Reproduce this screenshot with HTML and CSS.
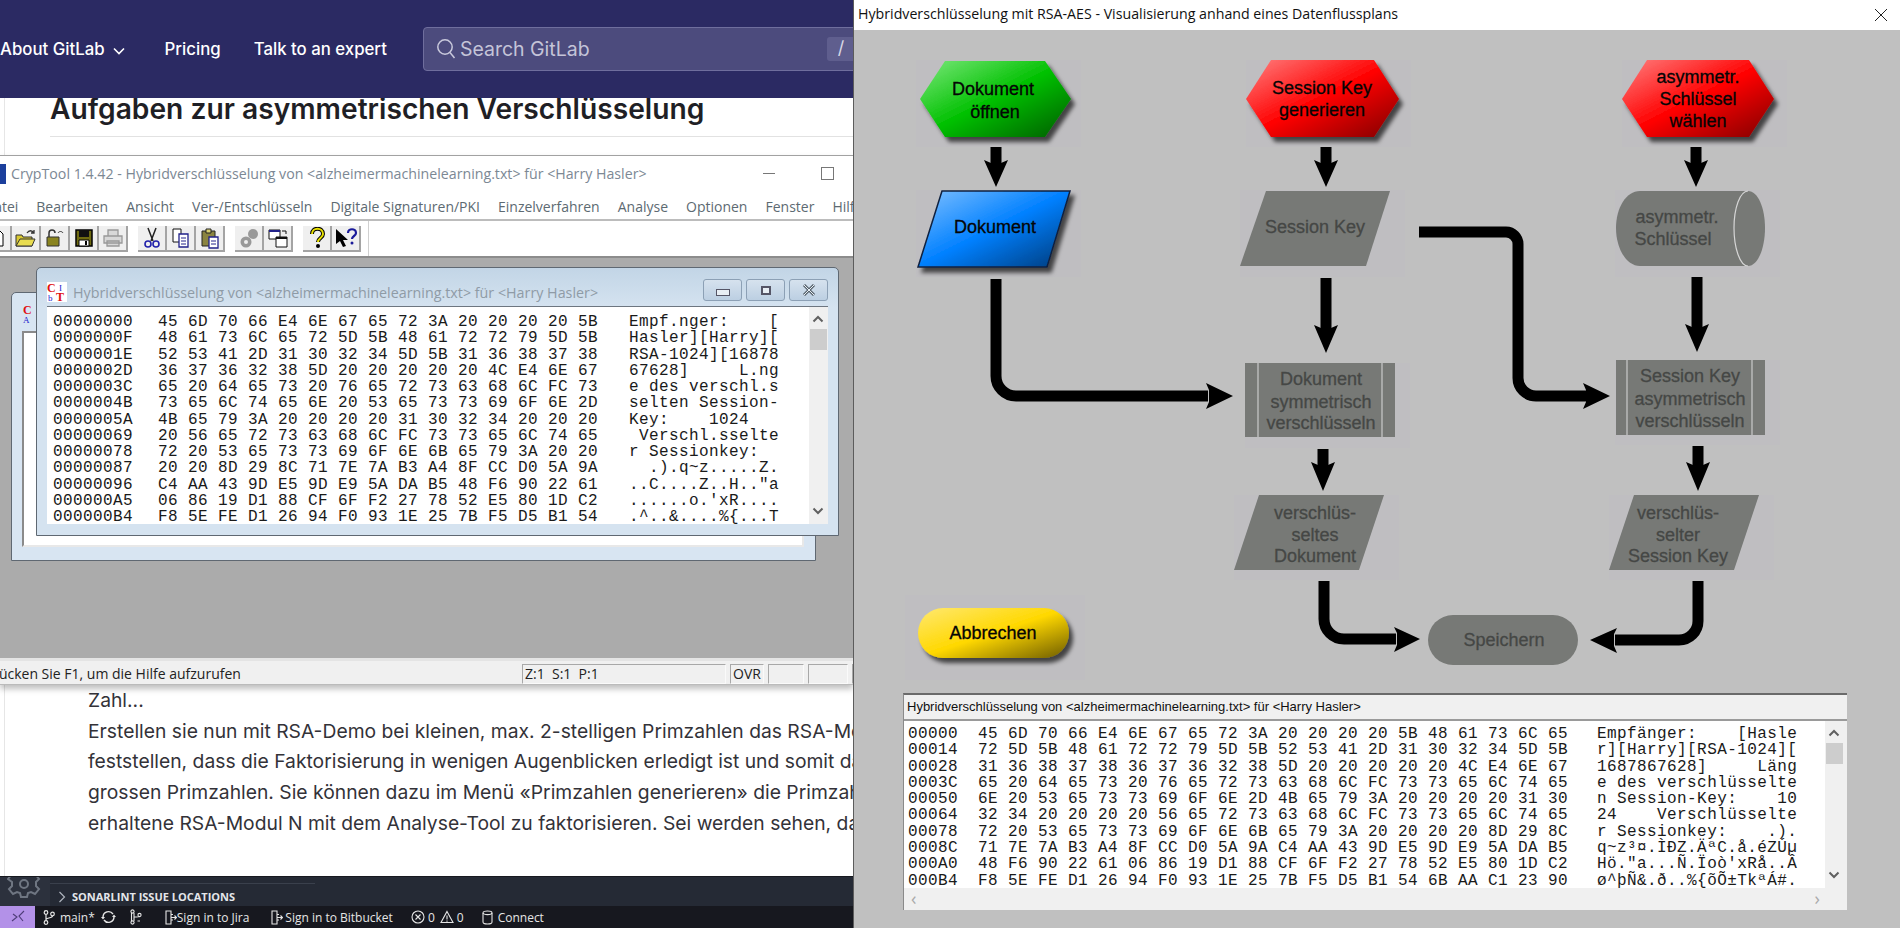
FILE: index.html
```html
<!DOCTYPE html>
<html lang="de">
<head>
    <meta charset="UTF-8">
    <title>Hybridverschlüsselung mit RSA-AES</title>
    <link rel="stylesheet" href="styles.css">
</head>
<body>
    <div class="left">
        <header class="nav">
            <a class="nav-item first">About GitLab</a>
            <svg class="chev" width="12" height="8" viewBox="0 0 12 8"><path d="M1 1.5l5 5 5-5" fill="none" stroke="#fff" stroke-width="1.6"/></svg>
            <a class="nav-item pricing">Pricing</a>
            <a class="nav-item talk">Talk to an expert</a>
            <div class="search">
                <svg width="20" height="22" viewBox="0 0 20 22"><circle cx="9" cy="9" r="7.2" fill="none" stroke="#c9c9dc" stroke-width="1.5"/><path d="M14 14.5l4.5 5.5" stroke="#c9c9dc" stroke-width="1.5"/></svg>
                <span>Search GitLab</span>
                <kbd>/</kbd>
            </div>
        </header>

        <main class="page">
            <h1>Aufgaben zur asymmetrischen Verschlüsselung</h1>
            <div class="rule"></div>
            <div class="article">
                <p>Zahl...</p>
                <p>Erstellen sie nun mit RSA-Demo bei kleinen, max. 2-stelligen Primzahlen das RSA-Modul</p>
                <p>feststellen, dass die Faktorisierung in wenigen Augenblicken erledigt ist und somit das</p>
                <p>grossen Primzahlen. Sie können dazu im Menü «Primzahlen generieren» die Primzahlen</p>
                <p>erhaltene RSA-Modul N mit dem Analyse-Tool zu faktorisieren. Sei werden sehen, dass</p>
            </div>
        </main>

        <div class="panel">
            <div class="activity">
                <svg width="34" height="30" viewBox="0 0 34 30"><path d="M14 1h6l1 4 3 1 4-2 4 5-3 3v4l3 3-4 5-4-2-3 1-1 4h-6l-1-4-3-1-4 2-4-5 3-3v-4L1 9l4-5 4 2 3-1z" fill="none" stroke="#6f7682" stroke-width="2"/><circle cx="17" cy="14" r="4" fill="none" stroke="#6f7682" stroke-width="2"/></svg>
            </div>
            <div class="panel-main">
                <div class="panel-line"></div>
                <div class="panel-title">
                    <svg width="8" height="12" viewBox="0 0 8 12"><path d="M1.5 1l5 5-5 5" fill="none" stroke="#aeb4bd" stroke-width="1.2"/></svg>
                    SONARLINT ISSUE LOCATIONS
                </div>
            </div>
        </div>
        <footer class="status">
            <div class="remote"><svg width="14" height="14" viewBox="0 0 14 14"><path d="M1 11l5-4-4-3M13 1L8 6l4 5" fill="none" stroke="#4e3d78" stroke-width="1.1"/></svg></div>
            <svg class="s-branch" width="12" height="15" viewBox="0 0 12 15"><g fill="none" stroke="#e6e6e6" stroke-width="1.2"><circle cx="3" cy="2.5" r="1.8"/><circle cx="3" cy="12.5" r="1.8"/><circle cx="9.5" cy="4" r="1.8"/><path d="M3 4.5v6M3 9.5c0-2 6.5-1 6.5-3.7"/></g></svg>
            <span class="s-main">main*</span>
            <svg class="s-sync" width="15" height="14" viewBox="0 0 15 14"><g fill="none" stroke="#e6e6e6" stroke-width="1.4"><path d="M2 7a5.5 5.5 0 0 1 10-3"/><path d="M13 7a5.5 5.5 0 0 1-10 3"/></g><path d="M0 7h4L2 9.5zM15 7h-4l2-2.500z" fill="#e6e6e6"/></svg>
            <svg class="s-graph" width="14" height="16" viewBox="0 0 14 16"><g fill="none" stroke="#e6e6e6" stroke-width="1.1"><circle cx="3.500" cy="2.500" r="1.600"/><circle cx="3.500" cy="13.500" r="1.600"/><circle cx="10.500" cy="6" r="1.600"/><path d="M2.500 4v8M5 4v8M5 8c3 0 5.500 0 5.500-.5M8.500 12h2.500"/></g></svg>
            <svg class="s-door" width="12" height="15" viewBox="0 0 12 15"><g fill="none" stroke="#e6e6e6" stroke-width="1.1"><path d="M1 1h5v13H1zM6 4.500h2M6 10h2M6 7.500h5.500M9.500 5.500l2 2-2 2"/></g></svg>
            <span class="s-jira">Sign in to Jira</span>
            <svg class="s-door2" width="12" height="15" viewBox="0 0 12 15"><g fill="none" stroke="#e6e6e6" stroke-width="1.1"><path d="M1 1h5v13H1zM6 4.500h2M6 10h2M6 7.500h5.500M9.500 5.500l2 2-2 2"/></g></svg>
            <span class="s-bit">Sign in to Bitbucket</span>
            <svg class="s-err" width="14" height="14" viewBox="0 0 14 14"><circle cx="7" cy="7" r="6" fill="none" stroke="#e6e6e6" stroke-width="1.1"/><path d="M4.500 4.500l5 5M9.500 4.500l-5 5" stroke="#e6e6e6" stroke-width="1.1"/></svg>
            <span class="s-n1">0</span>
            <svg class="s-warn" width="14" height="14" viewBox="0 0 14 14"><path d="M7 1.500l6 11H1z" fill="none" stroke="#e6e6e6" stroke-width="1.1"/><path d="M7 5.500v4M7 10.500v1.200" stroke="#e6e6e6" stroke-width="1.100"/></svg>
            <span class="s-n2">0</span>
            <svg class="s-db" width="11" height="15" viewBox="0 0 11 15"><g fill="none" stroke="#e6e6e6" stroke-width="1.1"><ellipse cx="5.500" cy="2.800" rx="4.500" ry="1.800"/><path d="M1 3v9c0 1 1.500 2 4.500 2s4.500-1 4.500-2V3"/></g></svg>
            <span class="s-conn">Connect</span>
        </footer>

        <section class="crypt">
            <div class="crypt-title">
                <span class="crypt-icon"></span>
                <span class="crypt-name">CrypTool 1.4.42 - Hybridverschlüsselung von &lt;alzheimermachinelearning.txt&gt; für &lt;Harry Hasler&gt;</span>
                <span class="win-min"></span>
                <span class="win-max"></span>
            </div>
            <nav class="menu">
                <span>Datei</span><span>Bearbeiten</span><span>Ansicht</span><span>Ver-/Entschlüsseln</span><span>Digitale Signaturen/PKI</span><span>Einzelverfahren</span><span>Analyse</span><span>Optionen</span><span>Fenster</span><span>Hilfe</span>
            </nav>
            <div class="toolbar">
                <div class="tools first-tools">
                    <button><svg width="20" height="20" viewBox="0 0 20 20"><path d="M5 2h7l4 4v12H5z" fill="#fff" stroke="#000"/></svg></button>
                    <button><svg width="22" height="20" viewBox="0 0 22 20"><path d="M1 7h6l1 2h9v9H1z" fill="#d8c832" stroke="#333"/><path d="M1 18l4-7h15l-3 7z" fill="#e8dc50" stroke="#333"/><path d="M12 5c2-3 5-3 7 0M19 2v3h-3" fill="none" stroke="#333" stroke-width="1.300"/></svg></button>
                    <button><svg width="22" height="20" viewBox="0 0 22 20"><path d="M3 9h12v9H3z" fill="#8a8420" stroke="#333"/><path d="M5 9V5a3 3 0 0 1 6 0" fill="none" stroke="#333" stroke-width="1.500"/><path d="M14 5c1-2 4-2 5 0" fill="none" stroke="#333"/></svg></button>
                    <button><svg width="20" height="20" viewBox="0 0 20 20"><path d="M2 2h16v16H2z" fill="#6e6a10" stroke="#000" stroke-width="1.500"/><path d="M5 2h10v7H5z" fill="#111"/><path d="M5 12h10v6H5z" fill="#fff" stroke="#000"/><path d="M11 13h2v4h-2z" fill="#000"/></svg></button>
                    <button><svg width="22" height="20" viewBox="0 0 22 20"><path d="M6 2h10v6H6zM2 8h18v7H2zM5 13h12v5H5z" fill="#d8d8d8" stroke="#999" stroke-width="1.300"/></svg></button>
                </div>
                <div class="tools">
                    <button><svg width="20" height="22" viewBox="0 0 20 22"><path d="M6 1l5 13M14 1L9 14" stroke="#222" stroke-width="1.500"/><circle cx="6" cy="17" r="3" fill="none" stroke="#2222aa" stroke-width="1.600"/><circle cx="14" cy="17" r="3" fill="none" stroke="#2222aa" stroke-width="1.600"/></svg></button>
                    <button><svg width="20" height="20" viewBox="0 0 20 20"><path d="M2 1h8v13H2z" fill="#fff" stroke="#111"/><path d="M8 6h9v13H8z" fill="#fff" stroke="#22228a" stroke-width="1.300"/><path d="M10 10h5M10 13h5M10 16h5" stroke="#22228a"/></svg></button>
                    <button><svg width="20" height="22" viewBox="0 0 20 22"><path d="M2 4h13v15H2z" fill="#8a8440" stroke="#222"/><path d="M6 2h5v4H6z" fill="#d8d070" stroke="#222"/><path d="M9 10h9v11H9z" fill="#fff" stroke="#22228a" stroke-width="1.300"/><path d="M11 14h5M11 17h5" stroke="#22228a"/></svg></button>
                </div>
                <div class="tools">
                    <button><svg width="20" height="20" viewBox="0 0 20 20"><circle cx="14" cy="6" r="5" fill="#999"/><circle cx="7" cy="14" r="5.500" fill="#999"/><circle cx="7" cy="14" r="2" fill="#eee"/></svg></button>
                    <button><svg width="22" height="20" viewBox="0 0 22 20"><path d="M2 2h11v9H2z" fill="#fff" stroke="#111"/><path d="M2 2h11v2H2z" fill="#22228a"/><path d="M9 9h11v10H9z" fill="#fff" stroke="#111"/><path d="M9 9h11v2H9z" fill="#111"/><path d="M15 3h4v3" fill="none" stroke="#111"/></svg></button>
                </div>
                <div class="tools">
                    <button><svg width="16" height="22" viewBox="0 0 16 22"><path d="M3 7c0-7 11-7 11 0 0 4-5 4-5 8" fill="none" stroke="#000" stroke-width="4"/><path d="M3 7c0-7 11-7 11 0 0 4-5 4-5 8" fill="none" stroke="#e8e000" stroke-width="2"/><circle cx="9" cy="19" r="2" fill="#000"/></svg></button>
                    <button><svg width="24" height="22" viewBox="0 0 24 22"><path d="M2 2v15l4-3 3 6 3-1-3-6h5z" fill="#000"/><path d="M14 6c0-5 8-5 8 0 0 3-4 3-4 6" fill="none" stroke="#1a1a9a" stroke-width="2.200"/><circle cx="18" cy="16" r="1.500" fill="#1a1a9a"/></svg></button>
                </div>
                <div class="tool-rest"></div>
            </div>
            <div class="mdi">
                <div class="mdi-win back">
                    <span class="ct-small"><b>C</b><i>A</i></span>
                    <div class="back-inner"></div>
                </div>
                <div class="mdi-win front">
                    <div class="mdi-title">
                        <svg class="ct" width="20" height="20" viewBox="0 0 20 20"><rect width="20" height="20" fill="#fff"/><text x="0" y="10" class="ct-r">C</text><text x="12" y="9" class="ct-b">I</text><text x="1" y="19" class="ct-b">b</text><text x="9" y="19" class="ct-r">T</text></svg>
                        <span class="mdi-name">Hybridverschlüsselung von &lt;alzheimermachinelearning.txt&gt; für &lt;Harry Hasler&gt;</span>
                        <span class="ctl"><i class="c-min"></i></span>
                        <span class="ctl"><i class="c-max"></i></span>
                        <span class="ctl c-x"><svg width="14" height="12" viewBox="0 0 14 12"><path d="M2 1l10 10M12 1L2 11" stroke="#58646e" stroke-width="3"/><path d="M2 1l10 10M12 1L2 11" stroke="#e8eef4" stroke-width="1"/></svg></span>
                    </div>
                    <div class="hex-client">
<pre class="hex-col off">00000000
0000000F
0000001E
0000002D
0000003C
0000004B
0000005A
00000069
00000078
00000087
00000096
000000A5
000000B4</pre>
<pre class="hex-col bytes">45 6D 70 66 E4 6E 67 65 72 3A 20 20 20 20 5B
48 61 73 6C 65 72 5D 5B 48 61 72 72 79 5D 5B
52 53 41 2D 31 30 32 34 5D 5B 31 36 38 37 38
36 37 36 32 38 5D 20 20 20 20 20 4C E4 6E 67
65 20 64 65 73 20 76 65 72 73 63 68 6C FC 73
73 65 6C 74 65 6E 20 53 65 73 73 69 6F 6E 2D
4B 65 79 3A 20 20 20 20 31 30 32 34 20 20 20
20 56 65 72 73 63 68 6C FC 73 73 65 6C 74 65
72 20 53 65 73 73 69 6F 6E 6B 65 79 3A 20 20
20 20 8D 29 8C 71 7E 7A B3 A4 8F CC D0 5A 9A
C4 AA 43 9D E5 9D E9 5A DA B5 48 F6 90 22 61
06 86 19 D1 88 CF 6F F2 27 78 52 E5 80 1D C2
F8 5E FE D1 26 94 F0 93 1E 25 7B F5 D5 B1 54</pre>
<pre class="hex-col text">Empf.nger:    [
Hasler][Harry][
RSA-1024][16878
67628]     L.ng
e des verschl.s
selten Session-
Key:    1024
 Verschl.sselte
r Sessionkey:
  .).q~z.....Z.
..C....Z..H.."a
......o.'xR....
.^..&amp;....%{...T</pre>
                        <div class="vbar">
                            <svg class="up" width="12" height="8" viewBox="0 0 12 8"><path d="M1.500 6.500L6 2l4.500 4.500" fill="none" stroke="#606060" stroke-width="2"/></svg>
                            <i class="thumb"></i>
                            <svg class="down" width="12" height="8" viewBox="0 0 12 8"><path d="M1.500 1.500L6 6l4.500-4.500" fill="none" stroke="#606060" stroke-width="2"/></svg>
                        </div>
                    </div>
                </div>
            </div>
            <div class="sbar">
                <span class="sb-help">Drücken Sie F1, um die Hilfe aufzurufen</span>
                <span class="pane p-pos">Z:1&nbsp; S:1&nbsp; P:1</span>
                <span class="pane p-ovr">OVR</span>
                <span class="pane p-a"></span>
                <span class="pane p-b"></span>
                <span class="pane p-c"></span>
            </div>
        </section>
    </div>

    <aside class="flow">
        <div class="flow-title">
            <span>Hybridverschlüsselung mit RSA-AES - Visualisierung anhand eines Datenflussplans</span>
            <svg width="14" height="14" viewBox="0 0 14 14"><path d="M1 1l12 12M13 1L1 13" stroke="#222" stroke-width="1"/></svg>
        </div>
        <div class="flow-body">
            <svg class="diagram" width="1046" height="663" viewBox="854 30 1046 663">
                <defs>
                    <linearGradient id="gGreen" x1="0" y1="0" x2="1" y2="1"><stop offset="0" stop-color="#7be87b"/><stop offset=".5" stop-color="#00c000"/><stop offset="1" stop-color="#005c00"/></linearGradient>
                    <linearGradient id="gRed" x1="0" y1="0" x2="1" y2="1"><stop offset="0" stop-color="#ff8080"/><stop offset=".5" stop-color="#ff0000"/><stop offset="1" stop-color="#800000"/></linearGradient>
                    <linearGradient id="gBlue" x1="0" y1="0" x2="1" y2="1"><stop offset="0" stop-color="#80c0ff"/><stop offset=".5" stop-color="#0080ff"/><stop offset="1" stop-color="#003a78"/></linearGradient>
                    <linearGradient id="gYellow" x1="0" y1="0" x2="1" y2="1"><stop offset="0" stop-color="#ffe870"/><stop offset=".5" stop-color="#ffd800"/><stop offset="1" stop-color="#6e5c00"/></linearGradient>
                    <filter id="drop" x="-20%" y="-20%" width="140%" height="140%"><feDropShadow dx="4" dy="5" stdDeviation="2" flood-color="#000" flood-opacity=".65"/></filter>
                </defs>

                <g class="halo">
                    <rect x="916" y="60" width="165" height="87"/><rect x="1246" y="60" width="165" height="87"/><rect x="1622" y="60" width="165" height="87"/>
                    <rect x="916" y="190" width="165" height="87"/><rect x="1240" y="190" width="165" height="87"/><rect x="1615" y="190" width="165" height="87"/>
                    <rect x="1245" y="363" width="165" height="85"/><rect x="1615" y="360" width="165" height="85"/>
                    <rect x="1234" y="495" width="165" height="85"/><rect x="1609" y="495" width="165" height="85"/>
                    <rect x="905" y="595" width="180" height="85"/>
                </g>

                <!-- Startknoten -->
                <path d="M945 61h100l26 38-26 38h-100l-25-38z" fill="url(#gGreen)" filter="url(#drop)"/>
                <path d="M1271 60h103l25 39-25 38h-103l-25-38z" fill="url(#gRed)" filter="url(#drop)"/>
                <path d="M1647 60h102l25 39-25 38h-102l-25-38z" fill="url(#gRed)" filter="url(#drop)"/>
                <text class="t-on" x="993" y="95">Dokument</text><text class="t-on" x="995" y="118">öffnen</text>
                <text class="t-on" x="1322" y="94">Session Key</text><text class="t-on" x="1322" y="116">generieren</text>
                <text class="t-on" x="1698" y="83">asymmetr.</text><text class="t-on" x="1698" y="105">Schlüssel</text><text class="t-on" x="1698" y="127">wählen</text>

                <!-- Datenobjekte -->
                <path d="M942 191h128l-23 76H918z" fill="url(#gBlue)" stroke="#102040" stroke-width="1.500" filter="url(#drop)"/>
                <text class="t-on" x="995" y="233">Dokument</text>
                <path d="M1266 191h124l-24 75h-126z" class="off-shape"/>
                <text class="t-off" x="1315" y="233">Session Key</text>
                <path d="M1640 191h108c10 0 17 17 17 37s-7 38-17 38h-108c-14 0-24-18-24-38s10-37 24-37z" class="off-shape"/>
                <path d="M1748 191c-8 0-14 17-14 37s6 38 14 38" fill="none" stroke="#d6d6d6" stroke-width="1.200"/>
                <text class="t-off" x="1677" y="223">asymmetr.</text><text class="t-off" x="1673" y="245">Schlüssel</text>

                <!-- Verschluesseln -->
                <rect class="off-shape" x="1245" y="363" width="150" height="74"/>
                <path d="M1258 363v74M1382 363v74" stroke="#c4c4c4" stroke-width="1.300"/>
                <text class="t-off" x="1321" y="385">Dokument</text><text class="t-off" x="1321" y="408">symmetrisch</text><text class="t-off" x="1321" y="429">verschlüsseln</text>
                <rect class="off-shape" x="1616" y="360" width="149" height="75"/>
                <path d="M1627 360v75M1752 360v75" stroke="#c4c4c4" stroke-width="1.300"/>
                <text class="t-off" x="1690" y="382">Session Key</text><text class="t-off" x="1690" y="405">asymmetrisch</text><text class="t-off" x="1690" y="427">verschlüsseln</text>

                <path d="M1259 495h125l-25 75h-125z" class="off-shape"/>
                <text class="t-off" x="1315" y="519">verschlüs-</text><text class="t-off" x="1315" y="541">seltes</text><text class="t-off" x="1315" y="562">Dokument</text>
                <path d="M1634 495h125l-25 75h-125z" class="off-shape"/>
                <text class="t-off" x="1678" y="519">verschlüs-</text><text class="t-off" x="1678" y="541">selter</text><text class="t-off" x="1678" y="562">Session Key</text>

                <rect class="off-shape" x="1428" y="615" width="150" height="50" rx="25"/>
                <text class="t-off" x="1504" y="646">Speichern</text>
                <rect x="918" y="608" width="151" height="50" rx="25" fill="url(#gYellow)" filter="url(#drop)"/>
                <text class="t-on" x="993" y="639">Abbrechen</text>

                <!-- Pfeile -->
                <g class="wire">
                    <path d="M996 147v18M1326 147v18M1696 147v18M1326 278v50M1697 277v50M1323 449v16M1698 446v20"/>
                    <path d="M996 279v97a20 20 0 0 0 20 20h192"/>
                    <path d="M1419 232h87a12 12 0 0 1 12 12v134a18 18 0 0 0 18 18h50"/>
                    <path d="M1324 581v38a20 20 0 0 0 20 20h52"/>
                    <path d="M1698 581v40a19 19 0 0 1-19 19h-64"/>
                </g>
                <g class="head">
                    <path d="M984 160l7 3h10l7-3-12 27zM1314 160l7 3h10l7-3-12 27zM1684 160l7 3h10l7-3-12 27z"/>
                    <path d="M1314 325l7 3h10l7-3-12 28zM1685 324l7 3h10l7-3-12 28z"/>
                    <path d="M1311 462l7 3h10l7-3-12 29zM1686 462l7 3h10l7-3-12 29z"/>
                    <path d="M1206 383l3 7v12l-3 7 27-13zM1583 383l3 7v12l-3 7 27-13z"/>
                    <path d="M1394 627l3 6v12l-3 7 26-13zM1617 628l-3 6v12l3 7-27-13z"/>
                </g>
            </svg>
            <div class="dump">
                <div class="dump-title">Hybridverschlüsselung von &lt;alzheimermachinelearning.txt&gt; für &lt;Harry Hasler&gt;</div>
                <div class="dump-main">
                    <div class="dump-text">
<pre class="hex-col off2">00000
00014
00028
0003C
00050
00064
00078
0008C
000A0
000B4</pre>
<pre class="hex-col bytes2">45 6D 70 66 E4 6E 67 65 72 3A 20 20 20 20 5B 48 61 73 6C 65
72 5D 5B 48 61 72 72 79 5D 5B 52 53 41 2D 31 30 32 34 5D 5B
31 36 38 37 38 36 37 36 32 38 5D 20 20 20 20 20 4C E4 6E 67
65 20 64 65 73 20 76 65 72 73 63 68 6C FC 73 73 65 6C 74 65
6E 20 53 65 73 73 69 6F 6E 2D 4B 65 79 3A 20 20 20 20 31 30
32 34 20 20 20 20 56 65 72 73 63 68 6C FC 73 73 65 6C 74 65
72 20 53 65 73 73 69 6F 6E 6B 65 79 3A 20 20 20 20 8D 29 8C
71 7E 7A B3 A4 8F CC D0 5A 9A C4 AA 43 9D E5 9D E9 5A DA B5
48 F6 90 22 61 06 86 19 D1 88 CF 6F F2 27 78 52 E5 80 1D C2
F8 5E FE D1 26 94 F0 93 1E 25 7B F5 D5 B1 54 6B AA C1 23 90</pre>
<pre class="hex-col text2">Empfänger:    [Hasle
r][Harry][RSA-1024][
1687867628]     Läng
e des verschlüsselte
n Session-Key:    10
24    Verschlüsselte
r Sessionkey:    .).
q~z³¤.ÌÐZ.ÄªC.å.éZÚµ
Hö."a...Ñ.Ïoò'xRå..Â
ø^þÑ&amp;.ð..%{õÕ±TkªÁ#.</pre>
                    </div>
                    <div class="vbar dump-v">
                        <svg class="up" width="12" height="8" viewBox="0 0 12 8"><path d="M1.500 6.500L6 2l4.500 4.500" fill="none" stroke="#606060" stroke-width="2"/></svg>
                        <i class="thumb"></i>
                        <svg class="down" width="12" height="8" viewBox="0 0 12 8"><path d="M1.500 1.500L6 6l4.500-4.500" fill="none" stroke="#606060" stroke-width="2"/></svg>
                    </div>
                </div>
                <div class="hbar"><span>‹</span><span>›</span></div>
            </div>
        </div>
    </aside>
</body>
</html>
```

FILE: styles.css
```css
html, body {
    height: 100%;
}

body {
    margin: 0;
    display: flex;
    width: 1900px;
    height: 928px;
    overflow: hidden;
    font-family: "Open Sans", sans-serif;
    background-color: #fff;
}

/* linke Seite: Browser, VS Code */
.left {
    position: relative;
    display: flex;
    flex-direction: column;
    width: 853px;
    flex: none;
    overflow: hidden;
}

.nav {
    display: flex;
    align-items: center;
    flex: none;
    height: 98px;
    background-color: #2b2a63;
    color: #fff;
    font-family: Inter, sans-serif;
    font-size: 16.800px;
    font-weight: 500;
    white-space: nowrap;
}

.chev {
    flex: none;
    margin-left: 8px;
    margin-top: 3px;
}

.pricing {
    margin-left: 40px;
}

.talk {
    margin-left: 33px;
}

.search {
    display: flex;
    align-items: center;
    box-sizing: border-box;
    flex: none;
    width: 470px;
    height: 44px;
    margin-left: 36px;
    padding-left: 12px;
    background-color: #4c4b7d;
    border: 1px solid #6f6e9d;
    border-radius: 4px;
    color: #c4c4d8;
    font-size: 19.500px;
    font-weight: 400;
}

.search svg {
    flex: none;
}

.search span {
    margin-left: 4px;
    width: 130px;
    flex: none;
}

.search kbd {
    display: block;
    flex: none;
    margin-left: 237px;
    width: 28px;
    height: 24px;
    background-color: #5f5e8e;
    border-radius: 3px;
    font: 400 18px Inter, sans-serif;
    text-align: center;
    color: #d8d8e6;
}

.page {
    flex: 1;
    margin-left: 4px;
    padding-left: 45px;
    border-left: 1px solid #e6e6e6;
    background-color: #fff;
    overflow: hidden;
}

h1 {
    margin: -8px 0 8px;
    font: 600 28.200px/38px Inter, sans-serif;
    color: #1f1f25;
    white-space: nowrap;
}

.rule {
    height: 1px;
    background-color: #e2e2e2;
}

.article {
    margin-top: 548px;
    margin-left: 38px;
    font-family: Inter, sans-serif;
    font-size: 19.300px;
    color: #333238;
    white-space: nowrap;
}

.article p {
    margin: 0;
    line-height: 30.700px;
}

.panel {
    display: flex;
    flex: none;
    height: 30px;
    background-color: #252a35;
    border-top: 1px solid #17191f;
    box-sizing: border-box;
}

.activity {
    width: 50px;
    height: 29px;
    overflow: hidden;
    background-color: #2c313d;
}

.activity svg {
    margin: -7px 0 0 7px;
}

.panel-line {
    width: 265px;
    height: 1px;
    margin-top: 6px;
    background-color: #3a404c;
}

.panel-title {
    display: flex;
    align-items: center;
    gap: 6px;
    margin: 5px 0 0 8px;
    font-size: 11px;
    font-weight: 700;
    color: #e4e6ea;
}

.status {
    position: relative;
    display: flex;
    align-items: center;
    flex: none;
    height: 22px;
    background-color: #17181f;
    color: #e6e6e6;
    font-size: 12px;
}

.remote {
    display: flex;
    align-items: center;
    justify-content: center;
    align-self: stretch;
    width: 35px;
    background-color: #b391e8;
}

.s-branch { margin-left: 8px; }
.s-main { margin-left: 5px; }
.s-sync { margin-left: 6px; }
.s-graph { margin-left: 13px; }
.s-door { margin-left: 22px; }
.s-jira { margin-left: 0; }
.s-door2 { margin-left: 22px; }
.s-bit { margin-left: 2px; }
.s-err { margin-left: 18px; }
.s-n1 { margin-left: 3px; }
.s-warn { margin-left: 5px; }
.s-n2 { margin-left: 3px; }
.s-db { margin-left: 18px; }
.s-conn { margin-left: 5px; }

/* CrypTool Hauptfenster */
.crypt {
    position: absolute;
    top: 155px;
    left: 0;
    right: 0;
    height: 530px;
    display: flex;
    flex-direction: column;
    border-top: 1px solid #a2a2a2;
    box-sizing: border-box;
    box-shadow: 0 4px 6px rgba(0, 0, 0, 0.25);
    background-color: #fff;
    color: #5d6a72;
    font-size: 14px;
}

.crypt-title {
    display: flex;
    align-items: center;
    height: 35px;
    font-size: 14.200px;
    color: #7c8894;
    white-space: nowrap;
}

.crypt-icon {
    width: 6px;
    height: 20px;
    background-color: #1c3f9c;
    flex: none;
}

.crypt-name {
    margin-left: 5px;
    width: 752px;
    flex: none;
}

.win-min {
    width: 12px;
    height: 1px;
    background-color: #777;
    flex: none;
}

.win-max {
    width: 11px;
    height: 11px;
    margin-left: 46px;
    border: 1px solid #777;
    flex: none;
}

.menu {
    display: flex;
    align-items: center;
    gap: 18px;
    box-sizing: border-box;
    height: 30px;
    padding-top: 2px;
    margin-left: -16px;
    white-space: nowrap;
    border-bottom: 2px solid #bcbcbc;
}

.toolbar {
    display: flex;
    align-items: flex-start;
    gap: 10px;
    height: 37px;
    padding-top: 5px;
    box-sizing: border-box;
    border-bottom: 2px solid #8c8c8c;
}

.tools {
    display: flex;
}

.first-tools {
    margin-left: -17px;
}

.tools button {
    display: flex;
    align-items: center;
    justify-content: center;
    width: 29px;
    height: 26px;
    padding: 0;
    background-color: #efefef;
    border: 0;
    border-right: 2px solid #a4a4a4;
    border-bottom: 2px solid #a4a4a4;
    box-sizing: border-box;
}

.tool-rest {
    align-self: stretch;
    width: 1px;
    margin-left: -3px;
    margin-top: -5px;
    background-color: #d0d0d0;
}

.mdi {
    position: relative;
    flex: none;
    height: 400px;
    background-color: #ababab;
}

.mdi-win {
    position: absolute;
    box-sizing: border-box;
    background-color: #d8e5f2;
    border: 1px solid #5f6872;
    border-radius: 5px 5px 0 0;
}

.back {
    top: 34px;
    left: 11px;
    width: 805px;
    height: 269px;
}

.ct-small {
    position: absolute;
    top: 12px;
    left: 11px;
    font-family: "Liberation Serif", serif;
    font-size: 12px;
    line-height: 10px;
}

.ct-small b {
    display: block;
    color: #e01010;
}

.ct-small i {
    display: block;
    font-style: normal;
    font-size: 9px;
    color: #2222cc;
}

.back-inner {
    position: absolute;
    top: 38px;
    left: 10px;
    right: 11px;
    bottom: 13px;
    background-color: #fff;
    border: 2px solid #8a8a8a;
    border-right-color: #e8e8e8;
    border-bottom-color: #e8e8e8;
}

.front {
    top: 9px;
    left: 36px;
    width: 803px;
    height: 269px;
    background: linear-gradient(#c2d5e6, #d5e3f0 40px);
}

.mdi-title {
    display: flex;
    align-items: center;
    box-sizing: border-box;
    height: 38px;
    padding: 10px 0 0 10px;
    color: #8f9ba6;
    font-size: 14.300px;
    white-space: nowrap;
}

.ct {
    flex: none;
}

.ct-r {
    font: 700 12px "Liberation Serif", serif;
    fill: #e01010;
}

.ct-b {
    font: 400 9px "Liberation Serif", serif;
    fill: #2222cc;
}

.mdi-name {
    margin-left: 6px;
    width: 630px;
    flex: none;
}

.ctl {
    display: flex;
    align-items: center;
    justify-content: center;
    box-sizing: border-box;
    flex: none;
    width: 39px;
    height: 22px;
    margin-right: 4px;
    margin-bottom: 4px;
    background: linear-gradient(#d6e2ee, #bccfe2);
    border: 1px solid #8ca0b5;
    border-radius: 3px;
}

.c-min {
    width: 12px;
    height: 5px;
    margin-top: 5px;
    background-color: #e8eef4;
    border: 1px solid #556;
}

.c-max {
    width: 10px;
    height: 9px;
    border: 2px solid #556;
    box-sizing: border-box;
    background-color: #e8eef4;
}

.hex-client {
    display: flex;
    height: 218px;
    margin: 0 10px;
    padding-left: 6px;
    padding-top: 7px;
    box-sizing: border-box;
    position: relative;
    background-color: #fff;
    border-top: 1px solid #6d7680;
    overflow: hidden;
}

.hex-col {
    margin: 0;
    font-family: "Liberation Mono", monospace;
    font-size: 16px;
    letter-spacing: 0.400px;
    line-height: 16.250px;
    color: #1a1a1a;
}

.bytes {
    margin-left: 25px;
}

.text {
    margin-left: 31px;
}

.vbar {
    position: absolute;
    top: 0;
    right: 0;
    bottom: 0;
    width: 19px;
    background-color: #f0f0f0;
}

.vbar .up,
.vbar .down {
    position: absolute;
    left: 3px;
}

.vbar .up {
    top: 8px;
}

.vbar .down {
    bottom: 9px;
}

.vbar .thumb {
    position: absolute;
    top: 22px;
    left: 1px;
    width: 17px;
    height: 21px;
    background-color: #cdcdcd;
}

.sbar {
    display: flex;
    align-items: center;
    flex: 1;
    padding-top: 2px;
    background-color: #f0f0f0;
    border-top: 3px solid #e4e4e4;
    border-bottom: 1px solid #bbb;
    color: #222;
    font-size: 14px;
    white-space: nowrap;
    overflow: hidden;
}

.sb-help {
    flex: none;
    width: 539px;
    margin-left: -17px;
}

.pane {
    flex: none;
    height: 20px;
    box-sizing: border-box;
    padding-left: 2px;
    border-top: 1px solid #a8a8a8;
    border-left: 1px solid #a8a8a8;
    border-right: 1px solid #fafafa;
    border-bottom: 1px solid #fafafa;
    margin-right: 4px;
    line-height: 18px;
}

.p-pos { width: 204px; }
.p-ovr { width: 34px; }
.p-a { width: 36px; }
.p-b { width: 40px; }
.p-c { width: 20px; }

/* rechtes Fenster: Datenflussplan */
.flow {
    display: flex;
    flex-direction: column;
    width: 1047px;
    flex: none;
    box-sizing: border-box;
    border-left: 1px solid #5c5c5c;
}

.flow-title {
    display: flex;
    align-items: center;
    justify-content: space-between;
    flex: none;
    height: 30px;
    padding: 0 12px 0 4px;
    background-color: #fff;
    color: #111;
    font-size: 14.200px;
    white-space: nowrap;
}

.flow-title span {
    margin-top: -4px;
}

.flow-body {
    flex: 1;
    background-color: #c0c0c0;
}

.diagram {
    display: block;
}

.diagram text {
    font-family: "Liberation Sans", sans-serif;
    font-size: 18px;
    text-anchor: middle;
    stroke-width: 0.300px;
}

.halo rect {
    fill: #bfbec1;
}

.t-on {
    fill: #050505;
    stroke: #050505;
}

.t-off {
    fill: #454745;
    stroke: #454745;
}

.off-shape {
    fill: #777976;
}

.wire path {
    fill: none;
    stroke: #000;
    stroke-width: 11;
}

.head path {
    fill: #000;
}

.dump {
    display: flex;
    flex-direction: column;
    box-sizing: border-box;
    width: 944px;
    height: 217px;
    margin-left: 49px;
    background-color: #f0f0f0;
    border-top: 2px solid #6a6a6a;
    border-left: 1px solid #8a8a8a;
}

.dump-title {
    height: 24px;
    padding-left: 3px;
    font-family: "Liberation Sans", sans-serif;
    font-size: 13px;
    line-height: 24px;
    color: #111;
    border-bottom: 2px solid #9a9a9a;
}

.dump-main {
    position: relative;
    display: flex;
    flex: none;
    height: 167px;
}

.dump-text {
    display: flex;
    flex: none;
    width: 921px;
    box-sizing: border-box;
    padding: 5px 0 0 4px;
    background-color: #fff;
}

.dump-text .hex-col {
    line-height: 16.300px;
}

.bytes2 {
    margin-left: 20px;
}

.text2 {
    margin-left: 29px;
}

.dump-v {
    width: 22px;
}

.hbar {
    display: flex;
    justify-content: space-between;
    padding: 0 27px 0 7px;
    color: #aaa;
    font-size: 18px;
    line-height: 20px;
}
```
